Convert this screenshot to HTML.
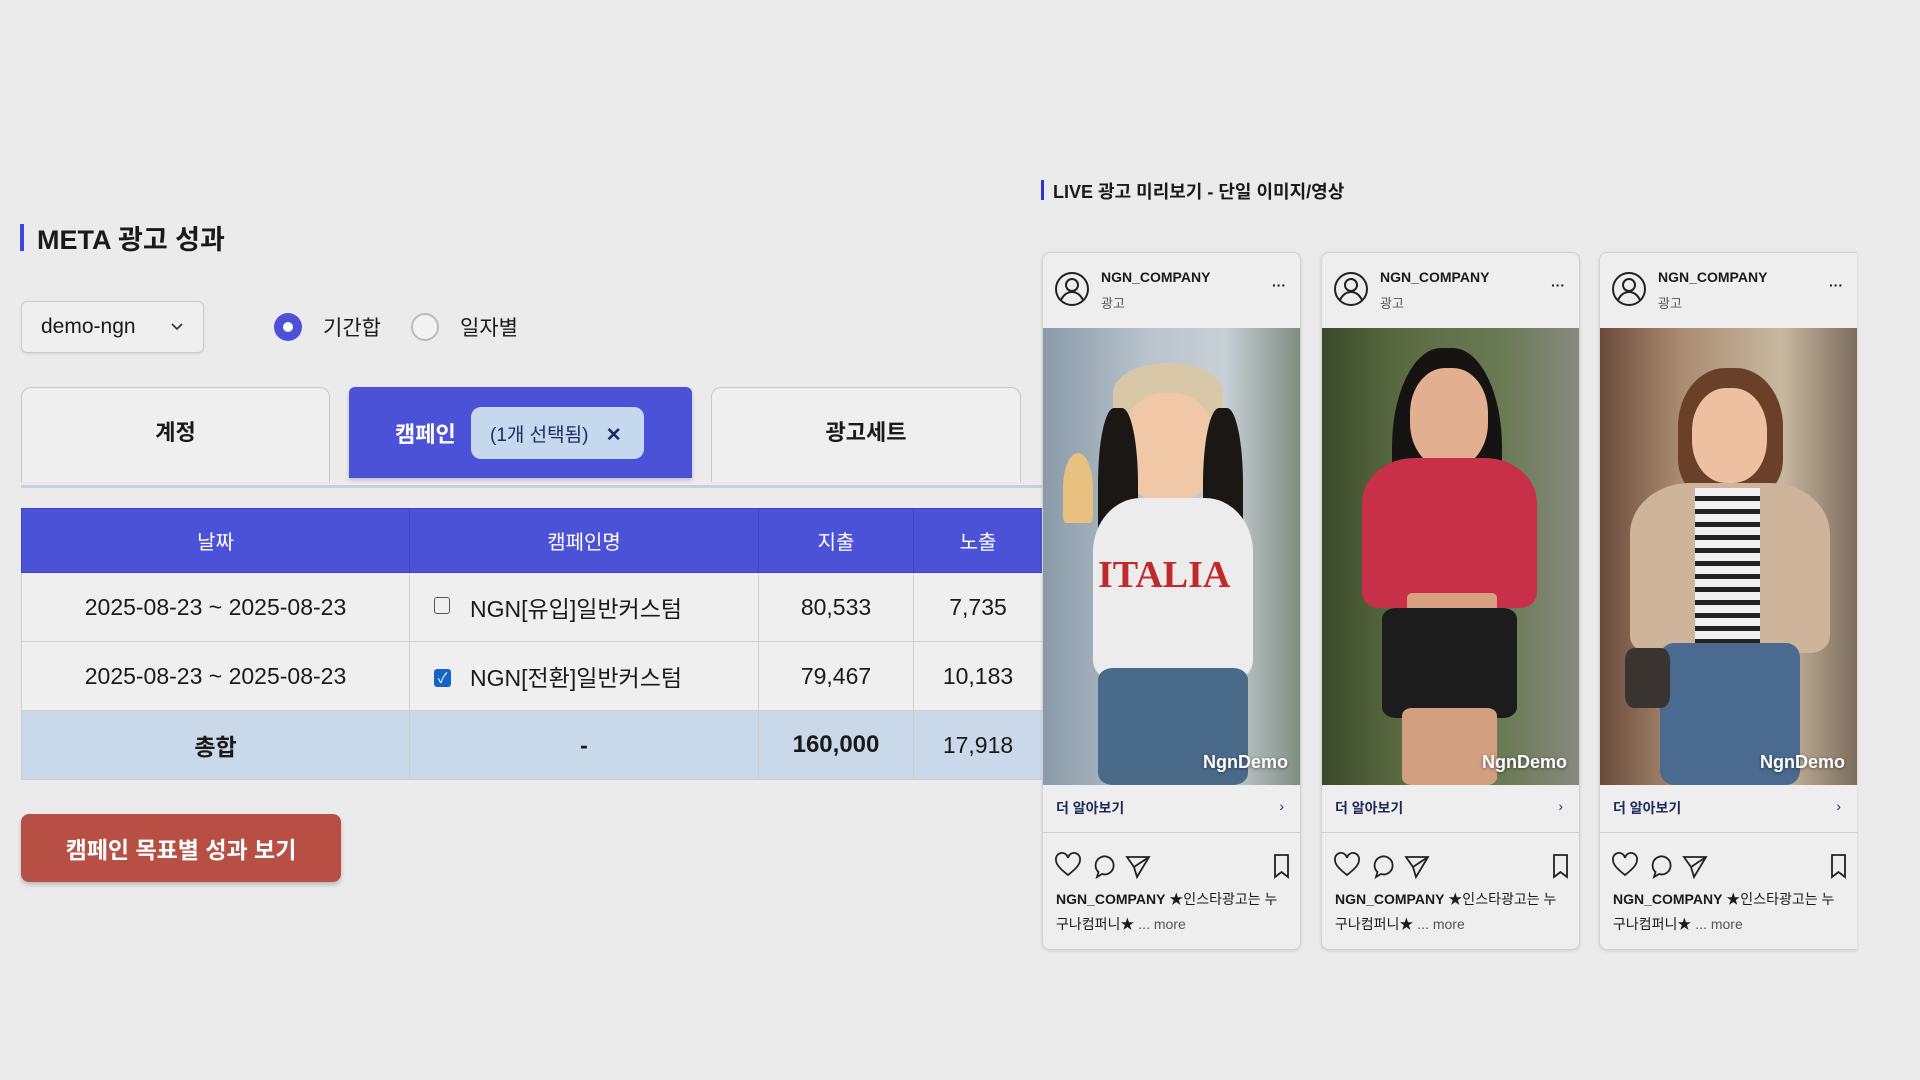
<!DOCTYPE html>
<html><head><meta charset="utf-8"><style>
*{box-sizing:border-box;margin:0;padding:0}
body{width:1920px;height:1080px;background:#ebebeb;font-family:"Liberation Sans","Noto Sans CJK KR",sans-serif;color:#1a1a1a;position:relative;overflow:hidden}
.a{position:absolute}
.t{display:flex;align-items:center;justify-content:center}
table{border-collapse:collapse;position:absolute;left:21px;top:508px;width:1030px}
td,th{border:1px solid #cfcfcf;text-align:center;font-size:23px;font-weight:normal}
th{background:#4b52d8;color:#fff;height:64px;font-size:20px;border-color:#3f45c0}
td{height:69px;background:#efefef}
tr.tot td{background:#c9d9ea;font-weight:bold}
.card{position:absolute;top:252px;width:259px;height:698px;background:#eeeeee;border:1px solid #d2d2d2;border-radius:8px;overflow:hidden;box-shadow:0 1px 3px rgba(0,0,0,.12)}
.hd{height:75px;position:relative}
.img{position:absolute;top:75px;left:0;width:259px;height:457px;overflow:hidden}
.cta{position:absolute;top:532px;left:0;width:100%;height:48px;border-bottom:1px solid #cfcfcf;font-size:14px;font-weight:bold;color:#1e2a5a;padding:13px 0 0 13px}
.cap{position:absolute;left:13px;top:634px;font-size:14px;line-height:25px;width:240px}
.wm{position:absolute;right:14px;bottom:12px;color:#fff;font-size:18px;font-weight:bold;text-shadow:0 1px 3px rgba(0,0,0,.5)}
.b{position:absolute;border-radius:40%}
.ic{left:12px;top:599px}
</style></head><body>

<div class="a" style="left:20px;top:224px;width:4px;height:27px;background:#3d45e0"></div>
<div class="a" style="left:37px;top:218px;font-size:27px;font-weight:bold">META 광고 성과</div>

<div class="a" style="left:21px;top:301px;width:183px;height:52px;border:1px solid #ccc;border-radius:6px;background:#efefef;box-shadow:0 1px 2px rgba(0,0,0,.1)"><span class="a" style="left:19px;top:13px;font-size:21px">demo-ngn</span><svg class="a" style="left:148px;top:20px" width="14" height="10"><path d="M2 2l5 5 5-5" stroke="#333" stroke-width="1.6" fill="none"/></svg></div>
<div class="a" style="left:274px;top:313px;width:28px;height:28px;border-radius:50%;background:#4b52d8"><div class="a" style="left:9px;top:9px;width:10px;height:10px;border-radius:50%;background:#fff"></div></div>
<div class="a" style="left:323px;top:312px;font-size:21px">기간합</div>
<div class="a" style="left:411px;top:313px;width:28px;height:28px;border-radius:50%;border:2px solid #bbb;background:#f2f2f2"></div>
<div class="a" style="left:460px;top:312px;font-size:21px">일자별</div>

<div class="a t" style="left:21px;top:387px;width:309px;height:95px;border:1px solid #c8c8c8;border-bottom:none;border-radius:10px 10px 0 0;background:#efefef;font-size:22px;font-weight:bold;padding-bottom:8px">계정</div>
<div class="a" style="left:349px;top:387px;width:343px;height:91px;border-radius:6px 6px 0 0;background:#4b52d8;box-shadow:0 2px 4px rgba(0,0,0,.2)">
<span class="a" style="left:46px;top:30px;color:#fff;font-size:22px;font-weight:bold">캠페인</span>
<div class="a" style="left:122px;top:20px;width:173px;height:52px;border-radius:10px;background:#c5d8ee;font-size:19px;color:#1f2a60;padding:13px 0 0 19px">(1개 선택됨) <b style="margin-left:12px">✕</b></div></div>
<div class="a t" style="left:711px;top:387px;width:310px;height:95px;border:1px solid #c8c8c8;border-bottom:none;border-radius:10px 10px 0 0;background:#efefef;font-size:22px;font-weight:bold;padding-bottom:8px">광고세트</div>
<div class="a" style="left:21px;top:485px;width:1030px;height:3px;background:#c9cfe0"></div>

<table>
<tr><th style="width:388px">날짜</th><th style="width:349px">캠페인명</th><th style="width:155px">지출</th><th style="padding-right:8px">노출</th></tr>
<tr><td>2025-08-23 ~ 2025-08-23</td><td style="text-align:left;padding-left:24px"><span style="display:inline-block;width:16px;height:17px;border:1.5px solid #555;border-radius:3px;margin-right:20px;vertical-align:3px"></span>NGN[유입]일반커스텀</td><td>80,533</td><td style="padding-right:8px">7,735</td></tr>
<tr><td>2025-08-23 ~ 2025-08-23</td><td style="text-align:left;padding-left:24px"><span style="display:inline-block;width:17px;height:18px;background:#1764c8;border-radius:3px;margin-right:19px;vertical-align:3px;color:#fff;font-size:14px;line-height:18px;text-align:center">✓</span>NGN[전환]일반커스텀</td><td>79,467</td><td style="padding-right:8px">10,183</td></tr>
<tr class="tot"><td>총합</td><td>-</td><td style="font-size:24px">160,000</td><td style="font-weight:normal;padding-right:8px">17,918</td></tr>
</table>

<div class="a t" style="left:21px;top:814px;width:320px;height:68px;border-radius:8px;background:#b84f45;color:#fff;font-size:23px;font-weight:bold;box-shadow:0 3px 5px rgba(0,0,0,.2)">캠페인 목표별 성과 보기</div>

<div class="a" style="left:1041px;top:180px;width:3px;height:20px;background:#2a35d8"></div>
<div class="a" style="left:1053px;top:178px;font-size:18px;font-weight:bold">LIVE 광고 미리보기 - 단일 이미지/영상</div>

<div class="card" style="left:1042px">
<div class="hd"><svg class="a" style="left:11px;top:18px" width="36" height="36" viewBox="0 0 36 36" fill="none" stroke="#222" stroke-width="2"><circle cx="18" cy="18" r="16"/><circle cx="18" cy="14" r="6"/><path d="M7 29c3-6 7-8 11-8s8 2 11 8"/></svg>
<div class="a" style="left:58px;top:16px;font-size:14px;font-weight:bold">NGN_COMPANY</div><div class="a" style="left:58px;top:40px;font-size:13px;color:#555">광고</div><div class="a" style="right:14px;top:24px;font-size:14px;font-weight:bold">···</div></div>
<div class="img" style="background:linear-gradient(90deg,#8a9aa8,#b8c3cc 40%,#c8d0d6 70%,#7d8c7e)">
<div class="b" style="left:70px;top:35px;width:110px;height:60px;background:#d9c8a8;border-radius:50% 50% 20% 20%"></div>
<div class="b" style="left:78px;top:65px;width:95px;height:110px;background:#f0c8a8;border-radius:45%"></div>
<div class="b" style="left:55px;top:80px;width:40px;height:190px;background:#1a1714"></div>
<div class="b" style="left:160px;top:80px;width:40px;height:190px;background:#1a1714"></div>
<div class="b" style="left:50px;top:170px;width:160px;height:180px;background:#ececec;border-radius:30% 30% 10% 10%"></div>
<div class="a" style="left:55px;top:225px;font-size:38px;font-weight:bold;color:#c02a2a;font-family:'Liberation Serif',serif">ITALIA</div>
<div class="b" style="left:20px;top:125px;width:30px;height:70px;background:#e8c080;border-radius:50% 50% 10% 10%"></div>
<div class="b" style="left:55px;top:340px;width:150px;height:117px;background:#4a6a8a;border-radius:10%"></div>
<div class="wm">NgnDemo</div></div>
<div class="cta">더 알아보기<span style="position:absolute;right:16px;font-weight:normal">›</span></div>
<svg class="a ic" width="240" height="28" fill="none" stroke="#222" stroke-width="1.8"><path d="M13 23C4 16 1 12 1 8a5.5 5.5 0 0 1 12-2 5.5 5.5 0 0 1 12 2c0 4-3 8-12 15z"/><path d="M47 22l-5 3 1.5-5a9 9 0 1 1 3.5 2z"/><path d="M72 5l22 0-12 20-3-10z M79 15l15-10"/><path d="M220 3h13v22l-6.5-5-6.5 5z"/></svg>
<div class="cap"><b>NGN_COMPANY</b> ★인스타광고는 누<br>구나컴퍼니★ <span style="color:#555">... more</span></div></div>

<div class="card" style="left:1321px">
<div class="hd"><svg class="a" style="left:11px;top:18px" width="36" height="36" viewBox="0 0 36 36" fill="none" stroke="#222" stroke-width="2"><circle cx="18" cy="18" r="16"/><circle cx="18" cy="14" r="6"/><path d="M7 29c3-6 7-8 11-8s8 2 11 8"/></svg>
<div class="a" style="left:58px;top:16px;font-size:14px;font-weight:bold">NGN_COMPANY</div><div class="a" style="left:58px;top:40px;font-size:13px;color:#555">광고</div><div class="a" style="right:14px;top:24px;font-size:14px;font-weight:bold">···</div></div>
<div class="img" style="background:linear-gradient(90deg,#3a4a2a,#5a6a40 30%,#6a7a55 70%,#8a8a80)">
<div class="b" style="left:70px;top:20px;width:110px;height:220px;background:#161412;border-radius:45% 45% 20% 20%"></div>
<div class="b" style="left:88px;top:40px;width:78px;height:100px;background:#e2b090;border-radius:45%"></div>
<div class="b" style="left:40px;top:130px;width:175px;height:150px;background:#c8304a;border-radius:30% 30% 10% 10%"></div>
<div class="b" style="left:85px;top:265px;width:90px;height:20px;background:#d8a080;border-radius:5px"></div>
<div class="b" style="left:60px;top:280px;width:135px;height:110px;background:#1c1c1c;border-radius:10%"></div>
<div class="b" style="left:80px;top:380px;width:95px;height:77px;background:#d2a080;border-radius:10%"></div>
<div class="wm">NgnDemo</div></div>
<div class="cta">더 알아보기<span style="position:absolute;right:16px;font-weight:normal">›</span></div>
<svg class="a ic" width="240" height="28" fill="none" stroke="#222" stroke-width="1.8"><path d="M13 23C4 16 1 12 1 8a5.5 5.5 0 0 1 12-2 5.5 5.5 0 0 1 12 2c0 4-3 8-12 15z"/><path d="M47 22l-5 3 1.5-5a9 9 0 1 1 3.5 2z"/><path d="M72 5l22 0-12 20-3-10z M79 15l15-10"/><path d="M220 3h13v22l-6.5-5-6.5 5z"/></svg>
<div class="cap"><b>NGN_COMPANY</b> ★인스타광고는 누<br>구나컴퍼니★ <span style="color:#555">... more</span></div></div>

<div class="card" style="left:1599px;width:258px;border-right:none;border-radius:8px 0 0 8px">
<div class="hd"><svg class="a" style="left:11px;top:18px" width="36" height="36" viewBox="0 0 36 36" fill="none" stroke="#222" stroke-width="2"><circle cx="18" cy="18" r="16"/><circle cx="18" cy="14" r="6"/><path d="M7 29c3-6 7-8 11-8s8 2 11 8"/></svg>
<div class="a" style="left:58px;top:16px;font-size:14px;font-weight:bold">NGN_COMPANY</div><div class="a" style="left:58px;top:40px;font-size:13px;color:#555">광고</div><div class="a" style="right:14px;top:24px;font-size:14px;font-weight:bold">···</div></div>
<div class="img" style="background:linear-gradient(90deg,#6a4a3a,#a88a70 30%,#c8b8a0 70%,#7a6a5a)">
<div class="b" style="left:78px;top:40px;width:105px;height:130px;background:#6a4028;border-radius:45% 45% 30% 30%"></div>
<div class="b" style="left:92px;top:60px;width:75px;height:95px;background:#ecc0a0;border-radius:45%"></div>
<div class="b" style="left:30px;top:155px;width:200px;height:170px;background:#cdb49a;border-radius:30% 30% 10% 10%"></div>
<div class="a" style="left:95px;top:160px;width:65px;height:160px;background:repeating-linear-gradient(180deg,#f0f0f0 0 8px,#222 8px 13px)"></div>
<div class="b" style="left:60px;top:315px;width:140px;height:142px;background:#4a6a90;border-radius:10%"></div>
<div class="b" style="left:25px;top:320px;width:45px;height:60px;background:#3a3430;border-radius:20%"></div>
<div class="wm">NgnDemo</div></div>
<div class="cta">더 알아보기<span style="position:absolute;right:16px;font-weight:normal">›</span></div>
<svg class="a ic" width="240" height="28" fill="none" stroke="#222" stroke-width="1.8"><path d="M13 23C4 16 1 12 1 8a5.5 5.5 0 0 1 12-2 5.5 5.5 0 0 1 12 2c0 4-3 8-12 15z"/><path d="M47 22l-5 3 1.5-5a9 9 0 1 1 3.5 2z"/><path d="M72 5l22 0-12 20-3-10z M79 15l15-10"/><path d="M220 3h13v22l-6.5-5-6.5 5z"/></svg>
<div class="cap"><b>NGN_COMPANY</b> ★인스타광고는 누<br>구나컴퍼니★ <span style="color:#555">... more</span></div></div>

</body></html>
